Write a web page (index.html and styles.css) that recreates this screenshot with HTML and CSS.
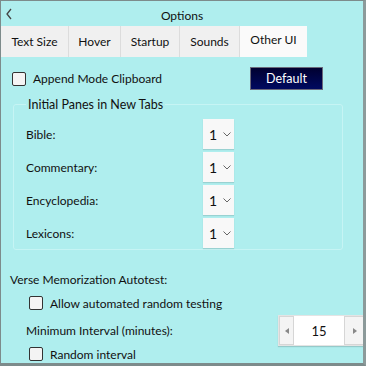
FILE: index.html
```html
<!DOCTYPE html>
<html lang="en">
<head>
	<meta charset="UTF-8">
	<title>Options</title>
	<link rel="stylesheet" href="styles.css">
</head>
<body>
	<div class="window">
		<!-- title bar -->
		<div class="titlebar">
			<svg class="back" width="6" height="12" viewBox="0 0 6 12"><path d="M5 1 L1 6 L5 11" fill="none" stroke="#444" stroke-width="1.3"/></svg>
			<span class="title">Options</span>
		</div>
		<!-- tabs -->
		<div class="tabs">
			<div class="tab">Text Size</div>
			<div class="tab">Hover</div>
			<div class="tab">Startup</div>
			<div class="tab">Sounds</div>
			<div class="tab sel">Other UI</div>
		</div>

		<div class="page">
			<div class="row top">
				<label class="check"><span class="box"></span>Append Mode Clipboard</label>
				<button class="btn">Default</button>
			</div>

			<fieldset class="group">
				<legend>Initial Panes in New Tabs</legend>
				<div class="pane">
					<span class="lbl">Bible:</span>
					<div class="combo">1<svg width="8" height="5" viewBox="0 0 8 5"><path d="M0.5 0.5 L4 4 L7.5 0.5" fill="none" stroke="#666" stroke-width="1"/></svg></div>
				</div>
				<div class="pane">
					<span class="lbl">Commentary:</span>
					<div class="combo">1<svg width="8" height="5" viewBox="0 0 8 5"><path d="M0.5 0.5 L4 4 L7.5 0.5" fill="none" stroke="#666" stroke-width="1"/></svg></div>
				</div>
				<div class="pane">
					<span class="lbl">Encyclopedia:</span>
					<div class="combo">1<svg width="8" height="5" viewBox="0 0 8 5"><path d="M0.5 0.5 L4 4 L7.5 0.5" fill="none" stroke="#666" stroke-width="1"/></svg></div>
				</div>
				<div class="pane">
					<span class="lbl">Lexicons:</span>
					<div class="combo">1<svg width="8" height="5" viewBox="0 0 8 5"><path d="M0.5 0.5 L4 4 L7.5 0.5" fill="none" stroke="#666" stroke-width="1"/></svg></div>
				</div>
			</fieldset>

			<div class="verse">Verse Memorization Autotest:</div>
			<label class="check sub"><span class="box"></span>Allow automated random testing</label>
			<div class="row interval">
				<span class="lbl">Minimum Interval (minutes):</span>
				<div class="spin">
					<span class="arr"><svg width="4" height="6" viewBox="0 0 4 6"><path d="M4 0 L0 3 L4 6 Z" fill="#888"/></svg></span>
					<span class="val">15</span>
					<span class="arr"><svg width="4" height="6" viewBox="0 0 4 6"><path d="M0 0 L4 3 L0 6 Z" fill="#888"/></svg></span>
				</div>
			</div>
			<label class="check sub"><span class="box"></span>Random interval</label>
		</div>
	</div>
</body>
</html>
```

FILE: styles.css
```css
body{margin: 0;font-family: Lato, "Noto Sans", sans-serif;font-size: 12px;color: #111;}
.window{width: 366px;height: 366px;box-sizing: border-box;background: #afeeee;border: 1px solid #7d8b8b;border-right: 3px solid #8c9a9a;border-bottom: 3px solid #7d8b8b;overflow: hidden;}

.titlebar{height: 25px;box-sizing: border-box;padding-top: 4px;display: flex;align-items: center;justify-content: center;position: relative;}
.titlebar .back{position: absolute;left: 5px;top: 7px;}

.tabs{display: flex;height: 31px;}
.tab{background: #f0f0f0;border-right: 1px solid #dcdcdc;display: flex;align-items: center;justify-content: center;}
.tab:nth-child(1){width: 67px;}
.tab:nth-child(2){width: 51px;}
.tab:nth-child(3){width: 58px;}
.tab:nth-child(4){width: 59px;}
.tab.sel{width: 67px;padding-bottom: 5px;background: #fafafa;border-right: none;}

.page{padding: 10px 0 0;}
.row{display: flex;align-items: center;}
.top{height: 23px;padding-left: 11px;padding-right: 40px;justify-content: space-between;}
.check{display: flex;align-items: center;}
.box{width: 12px;height: 12px;border: 1px solid #333;border-radius: 2px;background: #f4f4f4;margin-right: 7px;}
.btn{width: 73px;height: 23px;border: 1px solid #6a6a7a;background: linear-gradient(#000030, #000a60);color: #fff;font-family: inherit;font-size: 12.5px;padding: 0;}

.group{margin: 7px 20px 0 12px;padding: 7px 0 0 12px;border: 1px solid #c6f4f4;border-radius: 3px;height: 144px;}
.group legend{padding: 0 2px;margin-left: 0;font-size: 12.5px;}
.pane{display: flex;align-items: center;height: 30px;margin-bottom: 3px;}
.pane .lbl{width: 177px;}
.combo{width: 31px;height: 30px;box-sizing: border-box;background: #f8f8f8;box-shadow: 0 1px 1px rgba(0,0,0,0.12);display: flex;align-items: center;padding-left: 6px;font-size: 14px;}
.combo svg{margin-left: 6px;}

.verse{margin: 21px 0 0 9px;height: 18px;line-height: 18px;}
.sub{margin: 6px 0 0 28px;height: 16px;}
.interval{margin-top: 4px;padding-left: 25px;height: 31px;justify-content: space-between;}
.spin{width: 88px;height: 31px;box-sizing: border-box;background: #fff;border: 1px solid #e4e4e4;box-shadow: 0 1px 1px rgba(0,0,0,0.15);display: flex;align-items: stretch;margin-right: -3px;}
.spin .arr{width: 13px;background: #f4f4f4;border: 1px solid #d6d6d6;display: flex;align-items: center;justify-content: center;}
.spin .arr:last-child{width: 19px;}
.spin .val{flex: 1;display: flex;align-items: center;justify-content: center;font-size: 13px;}
.interval + .sub{margin-top: 0;}
```
